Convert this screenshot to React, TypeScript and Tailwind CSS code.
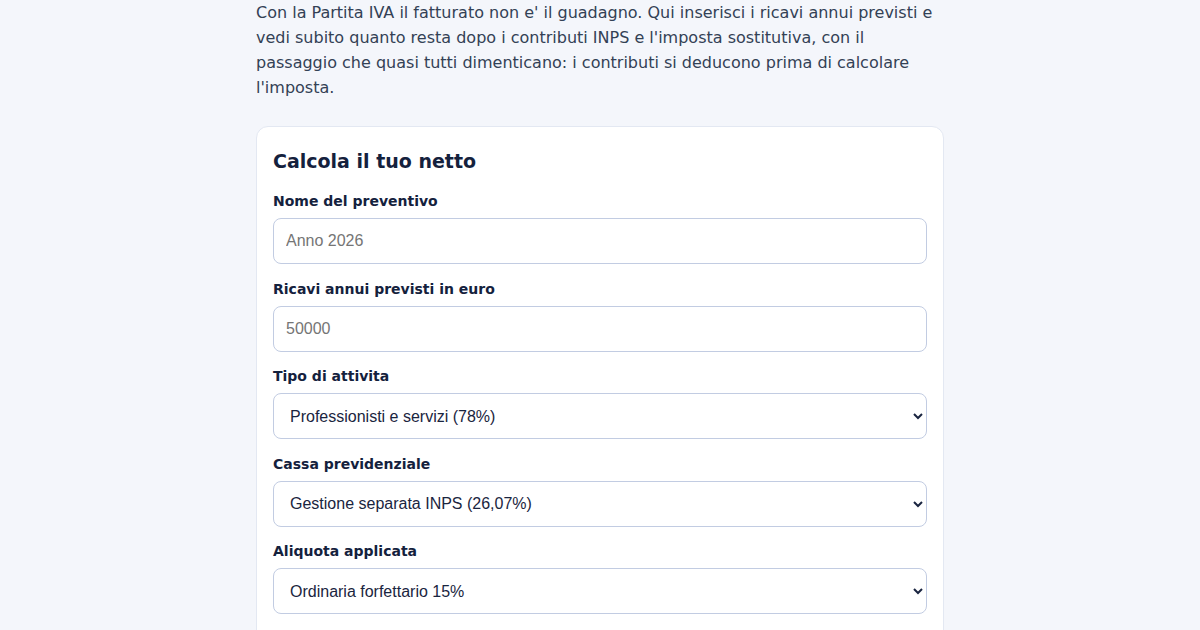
export default function App() {
  const fieldClass =
    "block h-[46px] w-full rounded-lg border border-[#c2cce2] bg-white px-3 text-base text-[#1a2540] placeholder:text-[#757575] focus:outline-none font-['Liberation_Sans',Arial,sans-serif]";
  const labelClass = "mb-[6px] block text-sm font-bold leading-[22px] text-[#14213d]";

  return (
    <div className="min-h-screen bg-[#f4f6fb] font-['DejaVu_Sans',sans-serif]">
      <div className="mx-auto w-[688px]">
        <p className="text-base leading-[25px] text-[#334155]">
          Con la Partita IVA il fatturato non e' il guadagno. Qui inserisci i ricavi annui previsti e vedi subito
          quanto resta dopo i contributi INPS e l'imposta sostitutiva, con il passaggio che quasi tutti
          dimenticano: i contributi si deducono prima di calcolare l'imposta.
        </p>

        <div className="mt-[26px] rounded-xl border border-[#e3e8f2] bg-white px-4 pt-4 pb-8">
          <h2 className="mb-[10px] text-[19px] font-bold leading-[37px] text-[#14213d]">Calcola il tuo netto</h2>

          <div className="flex flex-col gap-[13.5px]">
            <div>
              <label className={labelClass}>Nome del preventivo</label>
              <input type="text" placeholder="Anno 2026" className={fieldClass} />
            </div>
            <div>
              <label className={labelClass}>Ricavi annui previsti in euro</label>
              <input type="number" placeholder="50000" className={fieldClass} />
            </div>
            <div>
              <label className={labelClass}>Tipo di attivita</label>
              <select defaultValue="prof" className={fieldClass}>
                <option value="prof">Professionisti e servizi (78%)</option>
                <option value="comm">Commercio (40%)</option>
              </select>
            </div>
            <div>
              <label className={labelClass}>Cassa previdenziale</label>
              <select defaultValue="gs" className={fieldClass}>
                <option value="gs">Gestione separata INPS (26,07%)</option>
                <option value="art">Artigiani e commercianti</option>
              </select>
            </div>
            <div>
              <label className={labelClass}>Aliquota applicata</label>
              <select defaultValue="15" className={fieldClass}>
                <option value="15">Ordinaria forfettario 15%</option>
                <option value="5">Startup 5%</option>
              </select>
            </div>
          </div>
        </div>
      </div>
    </div>
  );
}
